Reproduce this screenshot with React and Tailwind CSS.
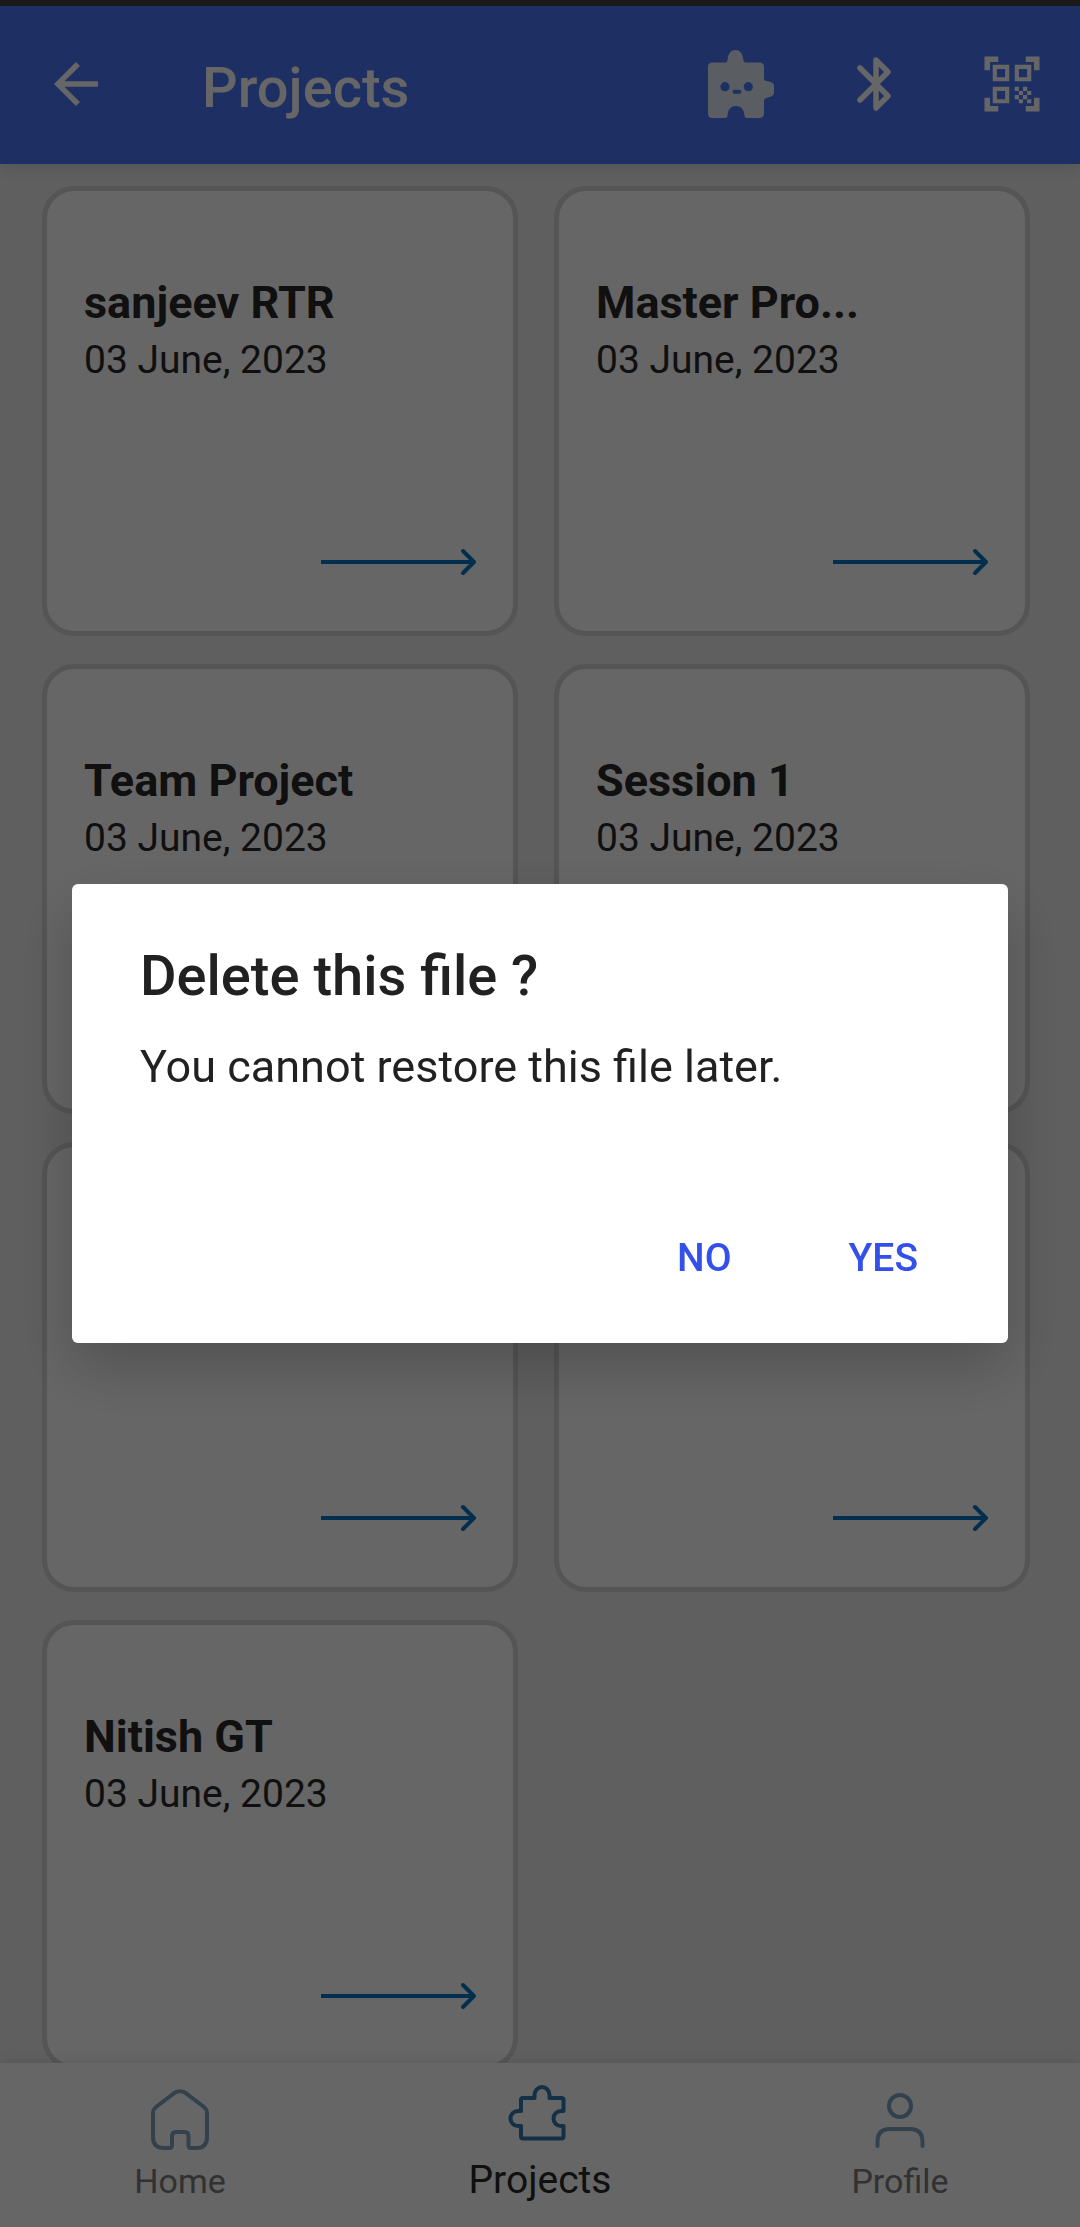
const projects = [
  { name: 'sanjeev RTR', date: '03 June, 2023' },
  { name: 'Master Pro...', date: '03 June, 2023' },
  { name: 'Team Project', date: '03 June, 2023' },
  { name: 'Session 1', date: '03 June, 2023' },
  { name: '', date: '' },
  { name: '', date: '' },
  { name: 'Nitish GT', date: '03 June, 2023' },
];

function BackIcon() {
  return (
    <svg width="66" height="66" viewBox="0 0 24 24" fill="currentColor" aria-hidden="true">
      <path d="M20 11H7.83l5.59-5.59L12 4l-8 8 8 8 1.41-1.41L7.83 13H20v-2z" />
    </svg>
  );
}

function PuzzleBotIcon() {
  return (
    <svg width="66" height="68" viewBox="0 0 66 68" fill="currentColor" aria-hidden="true">
      <path
        fillRule="evenodd"
        d="M4 12.500H17C19 12.500 19.500 11 19.800 8.500C20.500 3 23.500 0 27.500 0S34.500 3 35.200 8.500C35.500 11 36 12.500 38 12.500H51Q56 12.500 56 17V28.500C56 30.500 57.500 31 60 31.200C64 32 66 33.500 66 36V42.500C66 45 64 46.500 60 47.500C57.500 48 56 49 56 51V63Q56 68 51 68H39Q36.500 68 36.300 64.500C35.800 59 32.500 56 28 56S20.200 59 19.700 64.500Q19.500 68 17 68H4Q0 68 0 63V17Q0 12.500 4 12.500ZM17 32.100a4.600 4.600 0 1 0 0 9.200a4.600 4.600 0 1 0 0-9.200ZM40.300 32.100a4.600 4.600 0 1 0 0 9.200a4.600 4.600 0 1 0 0-9.200ZM26.500 39.800a2 2 0 0 0 0 4h5a2 2 0 0 0 0-4Z"
      />
    </svg>
  );
}

function BluetoothIcon() {
  return (
    <svg width="34" height="54" viewBox="0 0 34 54" fill="none" stroke="currentColor" strokeWidth="5.500" strokeLinecap="round" strokeLinejoin="round" aria-hidden="true">
      <path d="M3 11 31 39 19 51V3L31 15 3 43" />
    </svg>
  );
}

function QrIcon() {
  return (
    <svg width="66" height="66" viewBox="0 0 24 24" fill="currentColor" aria-hidden="true">
      <path d="M9.500 6.500v3h-3v-3h3M11 5H5v6h6V5zm-1.500 9.500v3h-3v-3h3M11 13H5v6h6v-6zm6.500-6.500v3h-3v-3h3M19 5h-6v6h6V5zm-6 8h1.500v1.500H13V13zm1.500 1.500H16V16h-1.500v-1.500zM16 13h1.500v1.500H16V13zm-3 3h1.500v1.500H13V16zm1.500 1.500H16V19h-1.500v-1.500zM16 16h1.500v1.500H16V16zm1.500-1.500H19V16h-1.500v-1.500zm0 3H19V19h-1.500v-1.500zM22 7h-2V4h-3V2h5v5zm0 15v-5h-2v3h-3v2h5zM2 22h5v-2H4v-3H2v5zM2 2v5h2V4h3V2H2z" />
    </svg>
  );
}

function LongArrow() {
  return (
    <svg width="156" height="28" viewBox="0 0 156 28" fill="none" stroke="currentColor" strokeWidth="4" aria-hidden="true">
      <path d="M0 14H153" />
      <path d="M142 3 153 14 142 25" strokeLinecap="round" strokeLinejoin="round" />
    </svg>
  );
}

function HomeIcon() {
  return (
    <svg width="60" height="64" viewBox="0 0 60 64" fill="none" stroke="currentColor" strokeWidth="4" aria-hidden="true">
      <path d="M24.500 6Q30 2.500 35.500 6L54 20Q57 22.500 57 26V50Q57 61 46.500 61H41Q38.500 61 38.500 58V49Q38.500 45 34.500 45H26Q22 45 22 49V58Q22 61 19.500 61H14Q3 61 3 50V26Q3 22.500 6 20Z" />
    </svg>
  );
}

function PuzzleIcon() {
  return (
    <svg width="64" height="56" viewBox="8 10 64 56" fill="none" stroke="currentColor" strokeWidth="4" strokeLinejoin="round" aria-hidden="true">
      <path d="M23 23H34.500V20A7.500 8 0 0 1 49.500 20V23H61.500Q63.500 23 63.500 25V36H61A7.500 7.500 0 0 0 61 51H63.500V61.500Q63.500 63.500 61.500 63.500H23Q21 63.500 21 61.500V51H18A7.500 7.500 0 0 1 18 36H21V25Q21 23 23 23Z" />
    </svg>
  );
}

function ProfileIcon() {
  return (
    <svg width="50" height="58" viewBox="0 0 50 58" fill="none" stroke="currentColor" strokeWidth="4" strokeLinecap="round" aria-hidden="true">
      <circle cx="25" cy="13" r="11" />
      <path d="M2.500 53V49Q2.500 36 15 36H35Q47.500 36 47.500 49V53" />
    </svg>
  );
}

function ProjectCard({ name, date }) {
  return (
    <a href="#project" className="flex h-[450px] flex-col justify-between rounded-[32px] border-5 border-[#d4d4d4] bg-white pt-[83px] pr-9 pb-[55px] pl-[37px] text-[#282828]">
      <div>
        <h2 className="text-[45px] leading-[58px] font-bold">{name}</h2>
        <p className="text-[39px] leading-[56px]">{date}</p>
      </div>
      <span className="self-end text-[#0573c8]">
        <LongArrow />
      </span>
    </a>
  );
}

function NavItem({ label, icon, active }) {
  return (
    <a
      href={'#' + label.toLowerCase()}
      aria-current={active ? 'page' : undefined}
      className={
        active
          ? 'flex flex-1 flex-col items-center justify-end gap-4 pb-6 text-[39px] leading-[46px] text-[#282828]'
          : 'flex flex-1 flex-col items-center justify-end gap-2.5 pb-[26px] text-[34px] leading-[40px] text-[#7c7c7c]'
      }
    >
      <span className={active ? 'text-[#3079b0]' : 'text-[#7ba3c0]'}>{icon}</span>
      {label}
    </a>
  );
}

export default function App() {
  return (
    <div className="relative flex h-screen flex-col bg-[#ededed] font-[Roboto,sans-serif]">
      <div className="h-1.5 shrink-0 bg-[#414141]" />
      <header className="z-10 flex h-[158px] shrink-0 items-center bg-[#4d78f8] pr-[35px] pb-0.5 pl-[43px] text-white shadow-[0_4px_14px_rgba(0,0,0,0.1)]">
        <button type="button" aria-label="Back">
          <BackIcon />
        </button>
        <h1 className="ml-[93px] flex-1 pt-2 text-[56px] leading-[64px] font-medium">Projects</h1>
        <div className="flex items-center">
          <button type="button" aria-label="Robot" className="mr-[83px] text-[#e0e8f4]">
            <PuzzleBotIcon />
          </button>
          <button type="button" aria-label="Bluetooth" className="mr-[88px]">
            <BluetoothIcon />
          </button>
          <button type="button" aria-label="Scan QR code">
            <QrIcon />
          </button>
        </div>
      </header>

      <main className="grid min-h-0 flex-1 grid-cols-2 content-start gap-x-9 gap-y-7 overflow-hidden pt-[22px] pr-[50px] pl-[42px]">
        {projects.map((project, i) => (
          <ProjectCard key={i} {...project} />
        ))}
      </main>

      <nav className="z-10 flex h-[164px] shrink-0 bg-white shadow-[0_0_14px_rgba(0,0,0,0.1)]">
        <NavItem label="Home" icon={<HomeIcon />} />
        <NavItem label="Projects" icon={<PuzzleIcon />} active />
        <NavItem label="Profile" icon={<ProfileIcon />} />
      </nav>

      <div className="fixed inset-0 z-20 flex items-center justify-center bg-black/60 px-[72px]">
        <section role="dialog" aria-modal="true" aria-labelledby="dialog-title" className="w-full rounded-md bg-white px-[68px] pt-[59px] pb-9 text-[#212121] shadow-[0_24px_60px_rgba(0,0,0,0.22)]">
          <h2 id="dialog-title" className="text-[56px] leading-[66px] font-medium">Delete this file ?</h2>
          <p className="mt-8 text-[45px] leading-[52px]">You cannot restore this file later.</p>
          <div className="mt-[116px] flex justify-end text-[39px] leading-[46px] font-medium text-[#3450ea]">
            <button type="button" className="px-11 py-[26px]">NO</button>
            <button type="button" className="ml-[51px] px-[22px] py-[26px]">YES</button>
          </div>
        </section>
      </div>
    </div>
  );
}
